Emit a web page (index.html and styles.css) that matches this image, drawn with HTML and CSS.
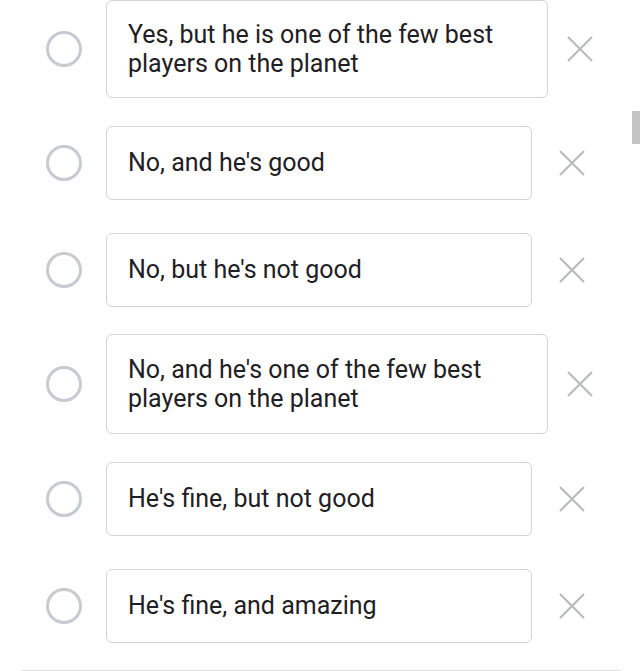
FILE: index.html
```html
<!DOCTYPE html>
<html>
<head>
<meta charset="utf-8">
<link rel="stylesheet" href="styles.css">
</head>
<body>
<div class="list">
  <div class="row gap-sm">
    <span class="radio"></span>
    <div class="box tall wide">Yes, but he is one of the few best players on the planet</div>
    <svg class="remove near" viewBox="0 0 26 26"><path d="M1 1 L25 25 M25 1 L1 25"/></svg>
  </div>
  <div class="row gap-lg">
    <span class="radio"></span>
    <div class="box">No, and he's good</div>
    <svg class="remove" viewBox="0 0 26 26"><path d="M1 1 L25 25 M25 1 L1 25"/></svg>
  </div>
  <div class="row gap-md">
    <span class="radio"></span>
    <div class="box">No, but he's not good</div>
    <svg class="remove" viewBox="0 0 26 26"><path d="M1 1 L25 25 M25 1 L1 25"/></svg>
  </div>
  <div class="row gap-sm">
    <span class="radio"></span>
    <div class="box taller wide">No, and he's one of the few best players on the planet</div>
    <svg class="remove near" viewBox="0 0 26 26"><path d="M1 1 L25 25 M25 1 L1 25"/></svg>
  </div>
  <div class="row gap-lg">
    <span class="radio"></span>
    <div class="box">He's fine, but not good</div>
    <svg class="remove" viewBox="0 0 26 26"><path d="M1 1 L25 25 M25 1 L1 25"/></svg>
  </div>
  <div class="row">
    <span class="radio"></span>
    <div class="box">He's fine, and amazing</div>
    <svg class="remove" viewBox="0 0 26 26"><path d="M1 1 L25 25 M25 1 L1 25"/></svg>
  </div>
  <div class="divider"></div>
</div>
<div class="scroll-thumb"></div>
</body>
</html>
```

FILE: styles.css
```css
html, body {
  margin: 0;
  padding: 0;
  background: #ffffff;
}

body {
  font-family: Roboto, "Noto Sans", sans-serif;
  color: #1f2024;
  width: 640px;
  height: 671px;
  overflow: hidden;
  position: relative;
}

.list {
  display: flex;
  flex-direction: column;
}

.row {
  display: flex;
  align-items: center;
}

.gap-sm { margin-bottom: 28px; }
.gap-md { margin-bottom: 27px; }
.gap-lg { margin-bottom: 33px; }

.radio {
  box-sizing: border-box;
  width: 36px;
  height: 36px;
  margin-left: 46px;
  border: 3.5px solid #c6cbd1;
  border-radius: 50%;
  flex: none;
}

.box {
  box-sizing: border-box;
  margin-left: 24px;
  width: 426px;
  height: 74px;
  padding: 0 20px 0 21px;
  border: 1px solid #d3d4d9;
  border-radius: 6px;
  display: flex;
  align-items: center;
  font-size: 25px;
  line-height: 29.5px;
  flex: none;
}

.box.wide { width: 442px; }
.box.tall { height: 98px; }
.box.taller { height: 100px; }

.remove {
  width: 26px;
  height: 26px;
  margin-left: 27px;
  flex: none;
  fill: none;
  stroke: #b8bcc1;
  stroke-width: 2.2;
}

.remove.near { margin-left: 19px; }

.divider {
  margin: 27px 19px 0 21px;
  height: 1px;
  background: #dcdde1;
}

.scroll-thumb {
  position: absolute;
  right: 0;
  top: 111px;
  width: 8px;
  height: 33px;
  background: #c4c4c4;
}
```
